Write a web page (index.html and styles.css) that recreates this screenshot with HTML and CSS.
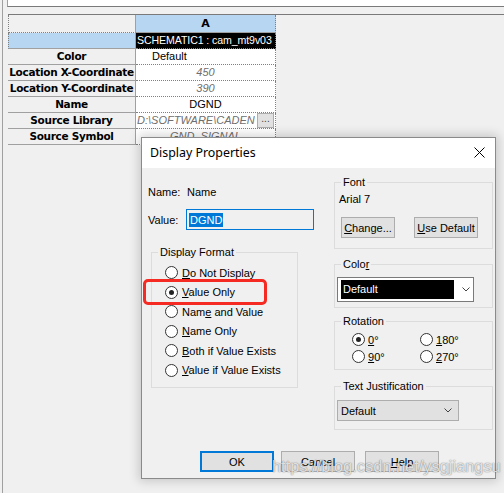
FILE: index.html
```html
<!DOCTYPE html>
<html>
<head>
<meta charset="utf-8">
<link rel="stylesheet" href="styles.css">
</head>
<body>
<div class="screen">
  <div class="frame">
    <div class="topbox"></div>
    <div class="sheet">
      <div class="grid">
        <div class="c lbl hdr"></div><div class="c val colhead">A</div>
        <div class="c lbl blue"></div><div class="c val black">SCHEMATIC1 : cam_mt9v03</div>
        <div class="c lbl">Color</div><div class="c val leftv">Default</div>
        <div class="c lbl">Location X-Coordinate</div><div class="c val ital">450</div>
        <div class="c lbl">Location Y-Coordinate</div><div class="c val ital">390</div>
        <div class="c lbl">Name</div><div class="c val">DGND</div>
        <div class="c lbl">Source Library</div><div class="c val ital libv"><span class="libtext">D:\SOFTWARE\CADENCE</span><span class="dots">...</span></div>
        <div class="c lbl">Source Symbol</div><div class="c val ital">GND_SIGNAL</div>
      </div>
    </div>
  </div>

  <div class="dialog">
    <div class="titlebar">
      <span class="title">Display Properties</span>
      <svg class="close" width="11" height="11" viewBox="0 0 11 11"><path d="M0.5 0.5L10.5 10.5M10.5 0.5L0.5 10.5" stroke="#000" stroke-width="1" fill="none"/></svg>
    </div>
    <div class="body">
      <div class="leftcol">
        <div class="namerow"><span class="fl">Name:</span><span>Name</span></div>
        <div class="valuerow"><span class="fl">Value:</span><div class="input"><span class="sel">DGND</span></div></div>
        <div class="grp fmt">
          <div class="gh">Display Format</div>
          <div class="radio"><span class="rb"></span><span><u>D</u>o Not Display</span></div>
          <div class="radio"><span class="rb on"></span><span><u>V</u>alue Only</span></div>
          <div class="radio"><span class="rb"></span><span>Nam<u>e</u> and Value</span></div>
          <div class="radio"><span class="rb"></span><span><u>N</u>ame Only</span></div>
          <div class="radio"><span class="rb"></span><span><u>B</u>oth if Value Exists</span></div>
          <div class="radio"><span class="rb"></span><span><u>V</u>alue if Value Exists</span></div>
        </div>
      </div>
      <div class="rightcol">
        <div class="grp fontg">
          <div class="gh">Font</div>
          <div class="fontname">Arial 7</div>
          <div class="fbtns">
            <div class="btn chg"><u>C</u>hange...</div>
            <div class="btn usedef"><u>U</u>se Default</div>
          </div>
        </div>
        <div class="grp colorg">
          <div class="gh">Colo<u>r</u></div>
          <div class="combo">
            <div class="blackfield">Default</div>
            <svg class="chev" width="8" height="5" viewBox="0 0 8 5"><path d="M0.5 0.5L4 4L7.5 0.5" stroke="#444" fill="none"/></svg>
          </div>
        </div>
        <div class="grp rotg">
          <div class="gh">Rotation</div>
          <div class="rotgrid">
            <div class="radio r2"><span class="rb on"></span><span><u>0</u>°</span></div>
            <div class="radio r2"><span class="rb"></span><span><u>1</u>80°</span></div>
            <div class="radio r2"><span class="rb"></span><span><u>9</u>0°</span></div>
            <div class="radio r2"><span class="rb"></span><span><u>2</u>70°</span></div>
          </div>
        </div>
        <div class="grp justg">
          <div class="gh">Text Justification</div>
          <div class="combo2">
            <span>Default</span>
            <svg class="chev" width="8" height="5" viewBox="0 0 8 5"><path d="M0.5 0.5L4 4L7.5 0.5" stroke="#444" fill="none"/></svg>
          </div>
        </div>
      </div>
    </div>
    <div class="btnrow">
      <div class="btn big ok">OK</div>
      <div class="btn big cancel">Cancel</div>
      <div class="btn big help"><u>H</u>elp</div>
    </div>
    <div class="highlight"></div>
  </div>
  <div class="watermark">https://blog.csdn.net/ysgjiangsu</div>
</div>
</body>
</html>
```
FILE: styles.css
```css
html, body {
  margin: 0;
  padding: 0;
}
body {
  background: #f0f0f0;
  font-family: "Liberation Sans", Arial, sans-serif;
  font-size: 11px;
  color: #000;
}
.screen {
  position: relative;
  width: 504px;
  height: 493px;
  overflow: hidden;
  background: #f0f0f0;
}
.frame {
  margin-left: 2px;
  height: 493px;
  border-left: 1px solid #a0a0a0;
}
.topbox {
  margin-left: 4px;
  height: 6px;
  background: #fff;
  border-left: 1px solid #a0a0a0;
  border-bottom: 1px solid #7a7a7a;
}
.sheet {
  margin-top: 7px;
  margin-left: 5px;
  border-top: 1px solid #7a7a7a;
}
.grid {
  display: grid;
  grid-template-columns: 128px 140px;
  grid-template-rows: 18px repeat(7, 16px);
}
.c {
  box-sizing: border-box;
  overflow: hidden;
  white-space: nowrap;
  line-height: 15px;
}
.lbl {
  background: #f0f0f0;
  border-right: 1px solid #a0a0a0;
  border-bottom: 1px solid #a0a0a0;
  font-family: "DejaVu Sans", sans-serif;
  font-weight: bold;
  font-size: 10.5px;
  text-align: center;
  color: #000;
  letter-spacing: -0.3px;
}
.lbl.hdr {
  border-left: 1px dotted #808080;
  border-bottom: 1px dotted #808080;
}
.lbl.blue {
  background: #b7d6f2;
  border-left: 1px dotted #808080;
}
.val {
  background: #fff;
  border-right: 1px dotted #808080;
  border-bottom: 1px dotted #808080;
  text-align: center;
}
.colhead {
  background: #b7d6f2;
  font-family: "DejaVu Sans", sans-serif;
  font-weight: bold;
  font-size: 11px;
  line-height: 18px;
  border-bottom: 1px solid #a0a0a0;
}
.black {
  background: #000;
  color: #fff;
  text-align: left;
  padding-left: 1px;
  font-size: 10.6px;
  letter-spacing: -0.1px;
}
.leftv {
  text-align: left;
  padding-left: 16px;
}
.ital {
  font-style: italic;
  color: #6e6e6e;
}
.libv {
  display: flex;
  text-align: left;
}
.libtext {
  flex: 1;
  overflow: hidden;
  padding-left: 1px;
}
.dots {
  flex: none;
  width: 15px;
  height: 13px;
  margin: 0 1px 0 2px;
  background: #e1e1e1;
  border: 1px solid #adadad;
  font-style: normal;
  color: #444;
  line-height: 10px;
  text-align: center;
  font-size: 10px;
}

/* dialog */
.dialog {
  position: absolute;
  left: 141px;
  top: 137px;
  width: 355px;
  height: 342px;
  box-sizing: border-box;
  border: 1px solid #8a8a8a;
  background: #f0f0f0;
  box-shadow: 0 0 10px 2px rgba(0, 0, 0, 0.18);
  display: flex;
  flex-direction: column;
}
.titlebar {
  height: 30px;
  background: #fff;
  display: flex;
  align-items: center;
  justify-content: space-between;
  padding: 0 10px 0 8px;
}
.title {
  font-family: "Noto Sans", sans-serif;
  font-size: 12.4px;
  color: #000;
  margin-top: -1px;
}
.close {
  display: block;
  margin-top: -1px;
}
.body {
  display: grid;
  grid-template-columns: 166px 159px;
  column-gap: 20px;
  padding-left: 6px;
}
.leftcol, .rightcol {
  display: flex;
  flex-direction: column;
}
.namerow {
  margin-top: 17px;
  line-height: 14px;
  display: flex;
}
.fl {
  width: 39px;
  flex: none;
}
.valuerow {
  margin-top: 10px;
  display: flex;
  align-items: center;
  height: 21px;
}
.valuerow .fl {
  width: 38px;
}
.input {
  box-sizing: border-box;
  width: 129px;
  height: 21px;
  border: 1px solid #0078d7;
  background: #f0f0f0;
  padding: 2px 2px;
  display: flex;
  align-items: center;
}
.sel {
  background: #0078d7;
  color: #fff;
  line-height: 14px;
  padding: 0 1px;
}
.grp {
  border: 1px solid #dcdcdc;
  display: flex;
  flex-direction: column;
  padding-top: 0;
}
.gh {
  align-self: flex-start;
  margin-top: -7px;
  padding: 0 2px;
  line-height: 13px;
  height: 13px;
  background: #f0f0f0;
}
.fmt {
  margin-top: 22px;
  margin-left: 3px;
  width: 147px;
  box-sizing: border-box;
  padding: 0 0 7px 13px;
}
.fmt .gh {
  margin-left: -7px;
  margin-bottom: 4px;
}
.radio {
  display: flex;
  align-items: center;
  height: 19.5px;
}
.rb {
  box-sizing: border-box;
  width: 13px;
  height: 13px;
  border: 1px solid #333;
  border-radius: 50%;
  background: #fff;
  margin-right: 4px;
  flex: none;
  display: flex;
  align-items: center;
  justify-content: center;
}
.rb.on::after {
  content: "";
  width: 5px;
  height: 5px;
  border-radius: 50%;
  background: #222;
}
.fontg {
  margin-top: 14px;
  padding: 0 0 10px 4px;
}
.fontg .gh {
  margin-left: 2px;
  margin-bottom: 4px;
}
.fontname {
  line-height: 13px;
}
.fbtns {
  margin-top: 11px;
  display: flex;
  gap: 19px;
  padding-left: 2px;
}
.btn {
  box-sizing: border-box;
  height: 21px;
  background: #e1e1e1;
  border: 1px solid #adadad;
  display: flex;
  align-items: center;
  justify-content: center;
}
.chg { width: 54px; }
.usedef { width: 64px; }
.colorg {
  margin-top: 15px;
  padding: 0 0 5px 2px;
}
.colorg .gh {
  margin-left: 4px;
  margin-bottom: 6px;
}
.combo {
  box-sizing: border-box;
  width: 137px;
  height: 25px;
  border: 1px solid #7a7a7a;
  background: #fff;
  display: flex;
  align-items: center;
  padding-left: 3px;
}
.blackfield {
  width: 113px;
  height: 19px;
  background: #000;
  color: #fff;
  line-height: 18px;
  padding-left: 2px;
  box-sizing: border-box;
}
.combo .chev {
  margin-left: 8px;
}
.rotg {
  margin-top: 13px;
  padding: 0 0 4px 17px;
}
.rotg .gh {
  margin-left: -11px;
  margin-bottom: 3px;
}
.rotgrid {
  display: grid;
  grid-template-columns: 68px 60px;
}
.r2 {
  height: 17px;
}
.r2 .rb {
  margin-right: 3px;
}
.justg {
  margin-top: 16px;
  padding: 0 0 8px 2px;
}
.justg .gh {
  margin-left: 4px;
  margin-bottom: 7px;
}
.combo2 {
  box-sizing: border-box;
  width: 122px;
  height: 21px;
  background: #e1e1e1;
  border: 1px solid #adadad;
  display: flex;
  align-items: center;
  justify-content: space-between;
  padding: 0 6px 0 3px;
}
.btnrow {
  margin-top: 21px;
  display: flex;
  padding-left: 58px;
}
.big {
  width: 74px;
}
.ok {
  border: 2px solid #0078d7;
}
.cancel {
  margin-left: 7px;
}
.help {
  margin-left: 10px;
}
.highlight {
  position: absolute;
  left: 1px;
  top: 141px;
  width: 124px;
  height: 26px;
  box-sizing: border-box;
  border: 3px solid #f52a22;
  border-radius: 5px;
}
.watermark {
  position: absolute;
  left: 272px;
  top: 456px;
  font-family: "Liberation Sans", Arial, sans-serif;
  font-size: 16.4px;
  line-height: 20px;
  color: rgba(255, 255, 255, 0.8);
  text-shadow: 0 0 1px rgba(0, 0, 0, 0.5), 0 0 2px rgba(0, 0, 0, 0.2);
  white-space: nowrap;
}
```
